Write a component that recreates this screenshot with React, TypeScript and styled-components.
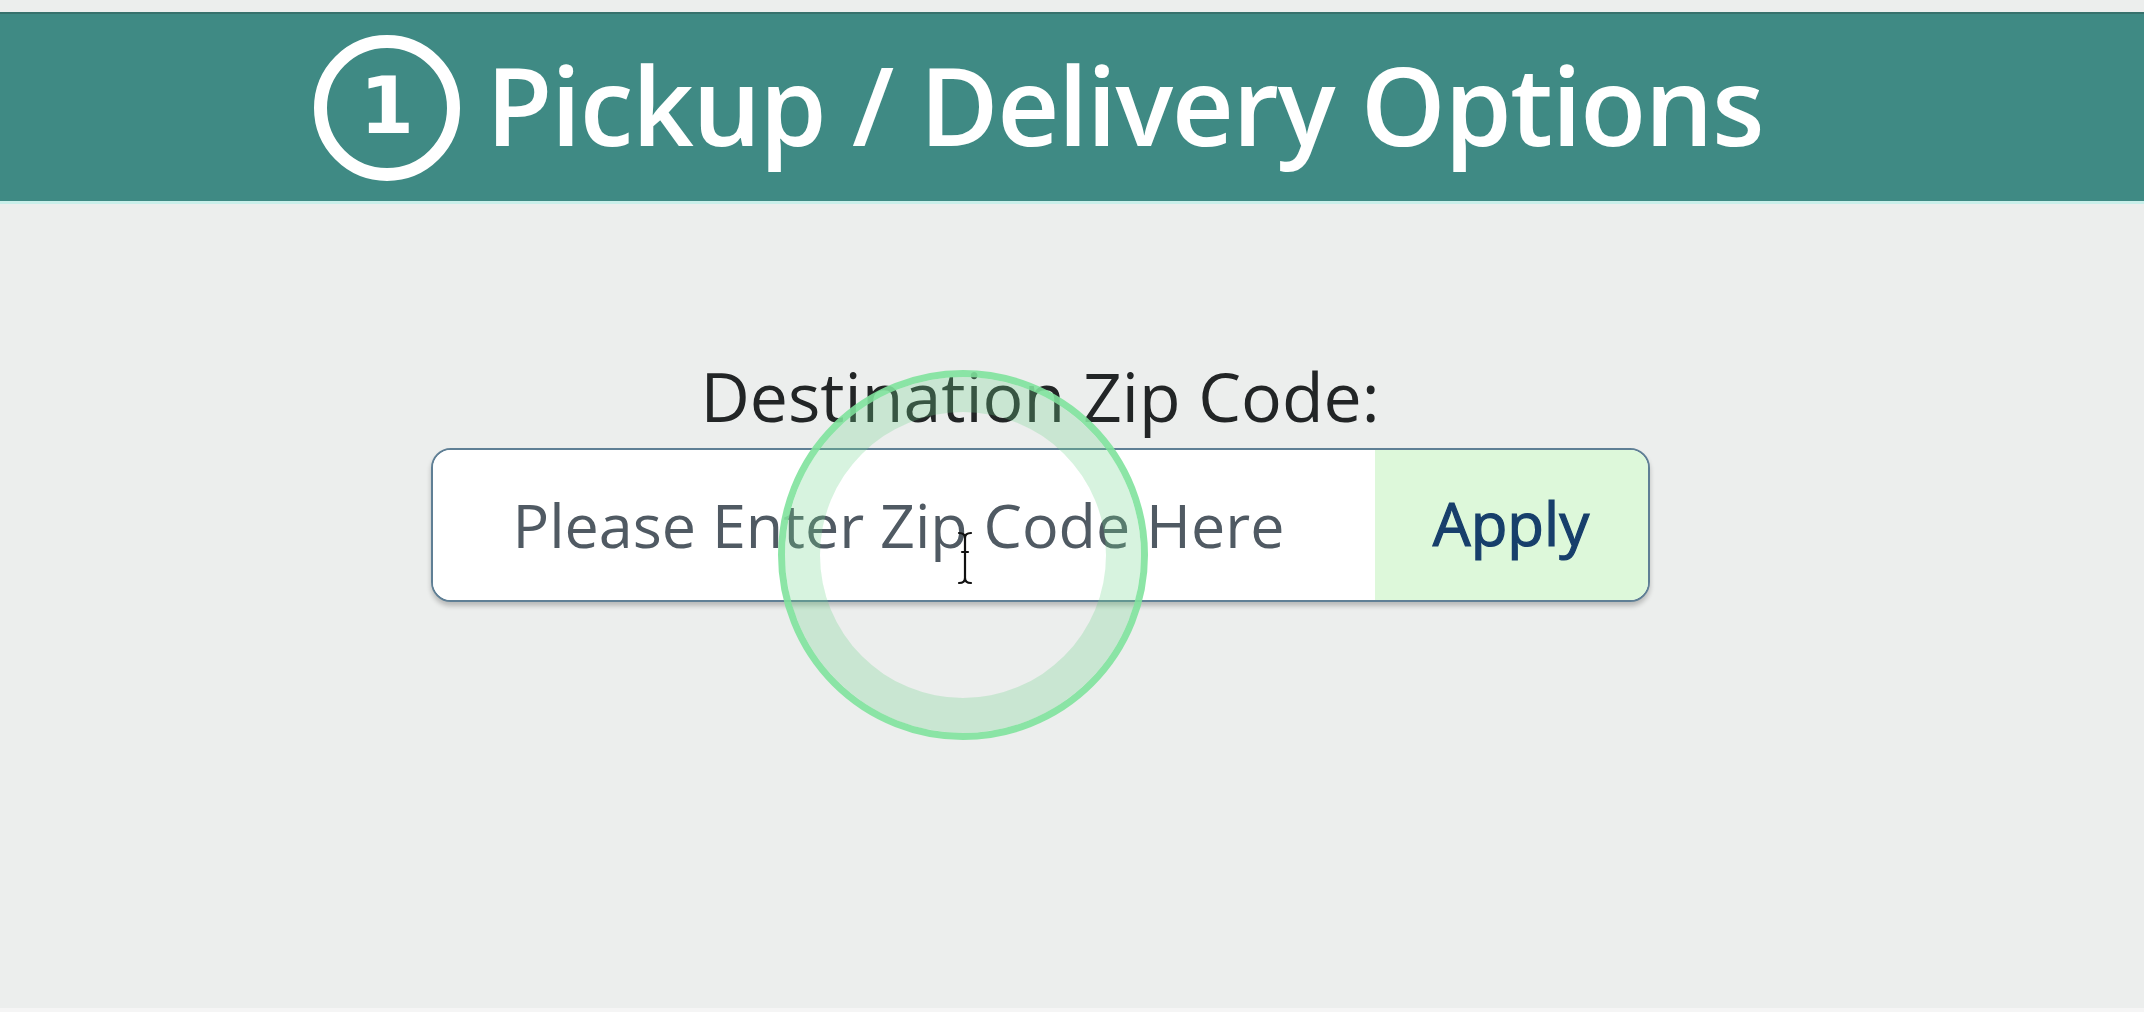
import React from 'react';
import styled, { createGlobalStyle } from 'styled-components';

const GlobalStyle = createGlobalStyle`
  html, body {
    margin: 0;
    padding: 0;
    background: #eceeed;
  }
  body {
    font-family: "Open Sans", "Noto Sans", sans-serif;
  }
`;

const Page = styled.div`
  position: relative;
  width: 2144px;
  height: 1012px;
  overflow: hidden;
  background: #eceeed;
  padding-top: 12px;
  box-sizing: border-box;
  border-bottom: 4px solid #f5f5f5;
`;

const Header = styled.header`
  display: flex;
  align-items: center;
  gap: 26px;
  height: 192px;
  padding-left: 314px;
  background: #3f8a84;
  border-top: 2px solid #37716c;
  border-bottom: 3px solid #c9efea;
  box-sizing: border-box;
`;

const StepBadge = styled.div`
  width: 146px;
  height: 146px;
  border: 13px solid #ffffff;
  border-radius: 50%;
  box-sizing: border-box;
  display: flex;
  align-items: center;
  justify-content: center;
  color: #ffffff;
  font-family: "DejaVu Sans", "Open Sans", sans-serif;
  font-size: 78px;
  font-weight: 700;
  line-height: 1;
  padding-bottom: 4px;
`;

const Title = styled.h1`
  margin: 0;
  color: #ffffff;
  font-size: 108px;
  font-weight: 600;
  letter-spacing: -1.4px;
  line-height: 1;
  padding-bottom: 6px;
`;

const Body = styled.main`
  display: flex;
  flex-direction: column;
  align-items: center;
  padding-right: 64px;
  padding-top: 158px;
`;

const Label = styled.label`
  color: #222526;
  font-size: 68px;
  font-weight: 400;
  line-height: 1;
  margin-bottom: 18px;
`;

const ZipBox = styled.div`
  display: flex;
  width: 1219px;
  height: 154px;
  border: 2px solid #5f7f95;
  border-radius: 20px;
  overflow: hidden;
  box-sizing: border-box;
  box-shadow: 0 4px 5px rgba(0, 0, 0, 0.22);
  background: #ffffff;
`;

const ZipInput = styled.input`
  flex: 1;
  border: none;
  outline: none;
  background: #ffffff;
  padding: 0 0 2px 80px;
  font-family: "Open Sans", "Noto Sans", sans-serif;
  font-size: 61px;
  color: #333;

  &::placeholder {
    color: #505a63;
    opacity: 1;
  }
`;

const ApplyButton = styled.button`
  width: 273px;
  border: none;
  background: #ddf8da;
  color: #173f6b;
  font-family: "Open Sans", "Noto Sans", sans-serif;
  font-size: 60px;
  font-weight: 400;
  -webkit-text-stroke: 1.2px #173f6b;
  padding: 0 0 4px;
  cursor: pointer;
`;

const ClickRing = styled.div`
  position: absolute;
  left: 778px;
  top: 370px;
  width: 370px;
  height: 370px;
  border-radius: 50%;
  border: 7px solid rgba(128, 226, 156, 0.9);
  box-shadow: inset 0 0 0 35px rgba(110, 212, 140, 0.28);
  box-sizing: border-box;
  pointer-events: none;
`;

const Cursor = styled.svg`
  position: absolute;
  left: 956px;
  top: 530px;
  pointer-events: none;
`;

export default function App() {
  return (
    <>
      <GlobalStyle />
      <Page>
        <Header>
          <StepBadge>1</StepBadge>
          <Title>Pickup / Delivery Options</Title>
        </Header>
        <Body>
          <Label htmlFor="zip">Destination Zip Code:</Label>
          <ZipBox>
            <ZipInput id="zip" placeholder="Please Enter Zip Code Here" />
            <ApplyButton>Apply</ApplyButton>
          </ZipBox>
        </Body>
        <ClickRing />
        <Cursor width="18" height="56" viewBox="0 0 18 56">
          <g fill="none" stroke="#111" strokeWidth="2.2" strokeLinecap="round">
            <path d="M3 3 Q9 3 9 8 Q9 3 15 3" />
            <path d="M9 8 V48" />
            <path d="M6 22 H12" />
            <path d="M3 53 Q9 53 9 48 Q9 53 15 53" />
          </g>
        </Cursor>
      </Page>
    </>
  );
}
